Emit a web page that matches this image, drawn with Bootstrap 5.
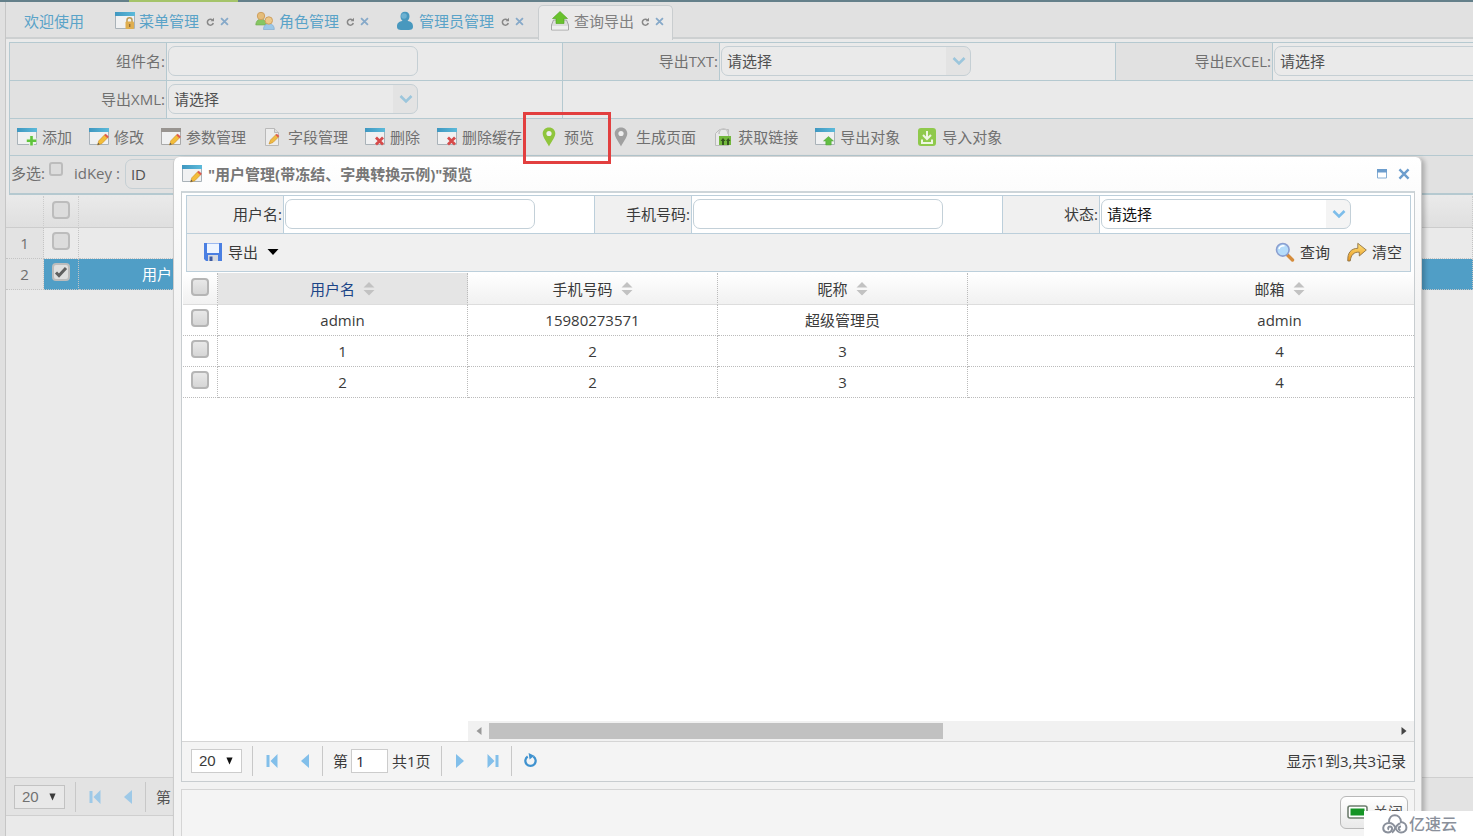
<!DOCTYPE html>
<html lang="zh-CN">
<head>
<meta charset="utf-8">
<meta name="viewport" content="width=device-width, initial-scale=1">
<title>查询导出</title>
<link href="https://cdn.jsdelivr.net/npm/bootstrap@5.3.0/dist/css/bootstrap.min.css" rel="stylesheet">
<style>
  :root { --line: #b5c9d0; --blue: #5aa3c8; }
  body { font-family: "Open Sans", "Noto Sans CJK SC", sans-serif; font-size: 15px; line-height: 20px; color: #707070; background: #eaeaea; }
  svg { display: block; flex: none; }
  .shell { min-height: 100vh; overflow: hidden; }
  .top-line { height: 2px; background: #64808a; }
  .top-line div { width: 109px; height: 2px; margin-left: 129px; background: #a5c46a; }
  .side { flex: none; width: 6px; background: #e0e0e0; border-right: 1px solid #c6c6c6; }
  .main { min-width: 0; }

  /* tabs */
  .tabs { height: 37px; padding: 3px 0 0 6px; gap: 5px; background: #e1e1e1; border-bottom: 2px solid #cdd0d1; }
  .tabs .nav-link { height: 34px; padding: 0 8px 2px 12px; color: var(--blue); border: 0; border-radius: 5px 5px 0 0; }
  .tabs .first { padding-right: 14px; }
  .tabs .nav-link.active { height: 35px; padding-left: 11px; padding-right: 7px; padding-bottom: 4px; color: #808080; background: #eaeaea; border: 1px solid #c9cdcf; border-bottom: 0; }
  .tab-name { margin: 0 7px 0 4px; }

  /* search forms */
  .form-box { border: 1px solid var(--line); border-right: 0; }
  .main > .form-box { margin: 3px 0 0 3px; }
  .f-row { height: 38px; border-bottom: 1px solid var(--line); background: #eaeaea; }
  .f-cell { width: 553px; flex: none; border-right: 1px solid var(--line); }
  .f-cell label { width: 157px; padding-right: 1px; text-align: right; line-height: 37px; background: #e1e1e1; border-right: 1px solid var(--line); }
  .field { width: 250px; height: 30px; margin: 3px 0 0 1px; padding: 0 5px; font-size: 15px; color: #505050; background-color: transparent; border: 1px solid #c5cfd4; border-radius: 7px; }
  .form-select.field { background-image: url("data:image/svg+xml,%3Csvg xmlns='http://www.w3.org/2000/svg' viewBox='0 0 14 10'%3E%3Cpath d='M1.5 2l5.5 5.5L12.5 2' fill='none' stroke='%239cc6dc' stroke-width='2.6'/%3E%3C/svg%3E"), linear-gradient(#e3e3e3, #e3e3e3); background-size: 14px 10px, 24px 100%; background-position: right 4px center, right center; background-repeat: no-repeat; }

  .tools { height: 37px; background: #e1e1e1; border-bottom: 1px solid var(--line); gap: 17px; padding: 0 7px; }
  .tool { gap: 5px; padding: 0; border: 0; border-radius: 0; color: inherit; font-size: 15px; line-height: 20px; display: flex; align-items: center; white-space: nowrap; }
  .hilite { position: absolute; inset: -15px -17px -17px -16px; border: 3px solid #e23f3f; z-index: 30; pointer-events: none; }
  .multi { height: 38px; background: #e1e1e1; border-bottom: 1px solid var(--line); padding-left: 1px; }
  .multi label { line-height: 34px; }
  .multi .key-label { margin: 0 4px 0 11px; }

  /* tick boxes */
  .tick { appearance: none; display: block; width: 18px; height: 18px; margin: 0; border: 2px solid #b5b5b5; border-radius: 4px; background: linear-gradient(#e8e8e8, #d6d6d6); }
  .tick.dim { border-color: #bcbcbc; background: #dcdcdc; }
  .tick.mini { width: 14px; height: 14px; margin-top: 6px; border-width: 2px; border-radius: 3px; }
  .tick:checked { background: #dfdfdf url("data:image/svg+xml,%3Csvg xmlns='http://www.w3.org/2000/svg' viewBox='0 0 14 14'%3E%3Cpath d='M2 7.5l3 3L12 3' fill='none' stroke='%23606060' stroke-width='3'/%3E%3C/svg%3E"); }

  /* data grids */
  .grid { table-layout: fixed; width: 100%; border-collapse: separate; border-spacing: 0; text-align: center; }
  .grid th, .grid td { height: 31px; padding: 0; font-weight: 400; vertical-align: middle; border-right: 1px dotted #bbb; border-bottom: 1px dotted #bbb; }
  .grid th { height: 32px; background: linear-gradient(#fff, #f1f1f1); border-bottom: 1px solid #ddd; }
  .grid .tick { margin: 0 auto 4px 8px; }
  .grid .name-col { background: #e5e5e5; color: #1c4587; }
  .grid .sort { display: inline-block; vertical-align: -1px; margin-left: 8px; }
  .back-grid { margin-top: 1px; }
  .back-grid th { background: linear-gradient(#eaeaea, #dfdfdf); border-color: #ccc; }
  .back-grid td { border-color: #c4c4c4; }
  .back-grid .no { background: #e3e3e3; }
  .back-grid .picked td:not(.no) { background: #509ec6; color: #fff; }
  .back-grid .picked .picked-name { text-align: left; padding-left: 63px; }

  /* pagers */
  .pager { height: 39px; border-top: 1px solid #d5d5d5; border-bottom: 1px solid #ccc; padding-left: 8px; background: #f4f4f4; }
  .dialog-panel .pager { padding: 0 0 2px 9px; height: 40px; border-bottom: 0; }
  .pager .page-size { appearance: none; width: 51px; height: 24px; padding: 0 0 0 7px; border: 1px solid #ccc; border-radius: 0; font: 15px/20px "Liberation Sans", sans-serif; color: inherit; background: #fff url("data:image/svg+xml,%3Csvg xmlns='http://www.w3.org/2000/svg' viewBox='0 0 8 8'%3E%3Cpath d='M0.5 0h7L4 8z' fill='%23111'/%3E%3C/svg%3E") no-repeat right 8px center / 7px 8px; }
  .sep { width: 1px; height: 30px; background: #c8c8c8; margin: 0 2px 0 10px; }
  .pager .tight { margin-left: 1px; }
  .pager .word { margin-left: 8px; }
  .pg { width: 33px; height: 26px; padding: 0; border: 0; display: flex; align-items: center; justify-content: center; }
  .page-no { width: 37px; height: 24px; margin: 0 4px 0 3px; padding: 0 4px; border: 1px solid #ccc; background: #fff; font-size: 15px; line-height: 20px; color: #223; }
  .back-pager { background: #e3e3e3; border-color: #cfcfcf; color: #555; }
  .back-pager .page-size { background-color: #eaeaea; opacity: .8; border-color: #bbb; }
  .back-pager .pg { opacity: .7; }
  .bottom-gap { height: 20px; }

  /* preview window */
  .dialog-win { position: absolute; z-index: 20; top: 157px; left: 173px; right: 51px; bottom: 0; color: #3a3a3a; background: linear-gradient(#fff 0, #fcfcfc 34px, #f2f2f2 160px); border: solid #ccc; border-width: 0 1px; border-radius: 6px 6px 0 0; box-shadow: 3px 1px 4px rgba(0,0,0,.22); padding: 0 6px 0 7px; }
  .dialog-title { height: 34px; gap: 6px; padding: 0 5px 0 1px; }
  .dialog-title h1 { font-size: 15px; line-height: 20px; font-weight: 700; color: #777; margin: 0; }
  .win-btn { width: 12px; height: 12px; padding: 0; border: 0; }
  .dialog-panel { --line: #bccfdb; min-height: 0; border: 1px solid #c8cdd0; border-top: 2px solid #cdd5d9; background: #fff; }
  .dialog-panel .form-box { margin: 2px 3px 0 4px; border-right: 1px solid var(--line); }
  .dialog-panel .f-row { background: #fff; }
  .dialog-panel .f-cell { flex: 1 1 0; width: auto; }
  .dialog-panel .f-cell:last-child { border-right: 0; }
  .dialog-panel .f-cell label { width: 97px; background: #f0f0f0; }
  .dialog-panel .field { color: #111; border-color: #c3d0d8; }
  .dialog-panel .form-select.field { background-image: url("data:image/svg+xml,%3Csvg xmlns='http://www.w3.org/2000/svg' viewBox='0 0 14 10'%3E%3Cpath d='M1.5 2l5.5 5.5L12.5 2' fill='none' stroke='%237dbdea' stroke-width='2.6'/%3E%3C/svg%3E"), linear-gradient(#f4f4f4, #f4f4f4); }
  .dialog-panel .tools { background: #f0f0f0; border-bottom: 0; padding: 0 8px 2px 16px; }
  .grid-area { margin: 1px 0 0 1px; }
  .frozen { width: 285px; flex: none; }
  .scroller { min-width: 0; overflow: hidden; }
  .scroller .grid { width: 1124px; }
  .h-bar { height: 20px; margin-left: 286px; background: #f1f1f1; padding: 2px 0; }
  .h-bar .arrow { width: 21px; display: flex; align-items: center; justify-content: center; }
  .thumb { width: 50.2%; background: #c1c1c1; }
  .dialog-foot { height: 47px; margin-top: 7px; padding: 6px 6px 0 0; background: #f4f4f4; border: 1px solid #d5d5d5; border-bottom: 0; }
  .close-btn { width: 68px; height: 33px; padding: 0 0 2px 6px; gap: 5px; font-size: 15px; line-height: 20px; color: #555; border: 1px solid #b8b8b8; border-radius: 6px; background: linear-gradient(#fff, #e9e9e9); display: flex; align-items: center; white-space: nowrap; }
  .brand { position: absolute; z-index: 40; right: 0; bottom: 0; width: 109px; height: 25px; padding-left: 18px; gap: 1px; background: #fff; color: #8a909b; font-size: 16px; font-weight: 500; }
</style>
</head>
<body>
<svg width="0" height="0" class="position-absolute" aria-hidden="true">
  <defs>
    <linearGradient id="gBar" x2="1" y2="0"><stop stop-color="#3f97c0"/><stop offset="1" stop-color="#5cbada"/></linearGradient>
    <linearGradient id="gOr" y2="1" x2="0"><stop stop-color="#ffe27a"/><stop offset="1" stop-color="#e8951d"/></linearGradient>
    <symbol id="win" viewBox="0 0 20 18"><path d="M.5 1h19v15.500h-19z" fill="#f0f1f2" stroke="#a9b2b8"/><path d="M0 0h20v4H0z" fill="url(#gBar)"/></symbol>
    <symbol id="pen" viewBox="0 0 20 18"><path d="M8.500 17l1.300-4.200 6-6.200 3.100 2.900-6.100 6.200z" fill="#f3bd3a" stroke="#c98c24" stroke-width=".6"/><path d="M15.300 7.200l1.400-1.500 3.200 3-1.500 1.500z" fill="#dd5a51"/><path d="M8.500 17l.7-2.200 1.600 1.500z" fill="#555"/></symbol>
    <symbol id="add" viewBox="0 0 20 18"><use href="#win"/><path d="M14.500 7.500v10M9.500 12.500h10" stroke="#e8f5e2" stroke-width="4.500"/><path d="M14.500 8v9.500M9.800 12.700h9.500" stroke="#5fc43b" stroke-width="2.600"/></symbol>
    <symbol id="edit" viewBox="0 0 20 18"><use href="#win"/><use href="#pen"/></symbol>
    <symbol id="param" viewBox="0 0 20 18"><path d="M.5 1h19v15.500h-19z" fill="#f0f1f2" stroke="#a9a9a9"/><path d="M0 0h20v4H0z" fill="#989490"/><use href="#pen"/></symbol>
    <symbol id="del" viewBox="0 0 20 18"><use href="#win"/><path d="M11 9.500l7 7M18 9.500l-7 7" stroke="#d64a4a" stroke-width="2.800"/></symbol>
    <symbol id="page" viewBox="0 0 20 20"><path d="M2.500 1.500h9l4 4v13h-13z" fill="#ececec" stroke="#b9b9b9"/><path d="M11.500 1.500v4h4" fill="#ddd" stroke="#b9b9b9"/><path d="M6 17l1.500-4L13 7.500l2.500 2.500L10 15.500z" fill="#efbb45" stroke="#c98c24" stroke-width=".6"/><path d="M12.500 8l1.300-1.300 2.500 2.400-1.300 1.500z" fill="#dd5a51"/></symbol>
    <symbol id="pin" viewBox="0 0 20 20"><path d="M10 .5c-3.800 0-6.300 2.700-6.300 6C3.700 10.500 8 15 10 19.500 12 15 16.300 10.500 16.300 6.500c0-3.300-2.500-6-6.300-6z" fill="currentColor"/><circle cx="10" cy="6.500" r="2.600" fill="#eee"/></symbol>
    <symbol id="link" viewBox="0 0 20 20"><path d="M2.500 6.500l4-4h9v16h-13z" fill="#e9e9e9" stroke="#bbb"/><path d="M6 7c0-7 9-7 9 0" fill="none" stroke="#c6c6c6" stroke-width="1.600"/><path d="M6 9h12v9H6z" fill="#73b83d"/><path d="M9 18v-4H7.500L10 11l2.500 3H11v4zM14 18v-4h-1l2.200-3 2.300 3H16v4z" fill="#35561f"/></symbol>
    <symbol id="out" viewBox="0 0 20 18"><use href="#win"/><path d="M13.500 8.500l5 4.500h-2.300v4h-5.400v-4H8.500z" fill="#62bd43" stroke="#4ca035" stroke-width=".5"/></symbol>
    <symbol id="in" viewBox="0 0 20 20"><rect x="1" y="1" width="18" height="18" rx="3" fill="#8fc94c"/><path d="M10 4v7M6 8l4 4 4-4M5 12.500V16h10v-3.500" fill="none" stroke="#eef6e2" stroke-width="2"/></symbol>
    <symbol id="lock" viewBox="0 0 20 18"><use href="#win"/><path d="M12 10V8c0-3 5-3 5 0v2" fill="none" stroke="#b99a55" stroke-width="1.500"/><rect x="10.500" y="9.500" width="8.500" height="7.500" rx="1" fill="#dfae4f"/><path d="M14.700 12v3" stroke="#967038" stroke-width="1.400"/></symbol>
    <symbol id="users" viewBox="0 0 20 20"><path d="M.8 14c0-8 10.500-8 10.500 0z" fill="#86c662" stroke="#6da84e" stroke-width=".6"/><circle cx="6" cy="5" r="3.700" fill="#e5bd79" stroke="#cfa060"/><path d="M8.500 18.500c0-8 10.800-8 10.800 0z" fill="#9cc8e8" stroke="#78a6cc" stroke-width=".6"/><circle cx="13.800" cy="9.500" r="3.700" fill="#edc887" stroke="#cfa060"/></symbol>
    <symbol id="man" viewBox="0 0 20 20"><path d="M10 .8c-3 0-4.500 2-4.500 4.500 0 2 .8 3.500 2 4.500-3.500 1-5.500 2.200-5.500 5.700 0 3 1.500 3.500 8 3.500s8-.5 8-3.500c0-3.500-2-4.700-5.500-5.700 1.200-1 2-2.500 2-4.500 0-2.500-1.500-4.500-4.500-4.500z" fill="#4898be"/><circle cx="9" cy="5" r="2.800" fill="#6db1d1"/></symbol>
    <symbol id="up" viewBox="0 0 20 20"><path d="M3.500 9h13l2 5v5h-17v-5z" fill="#ddd" stroke="#a5a5a5"/><path d="M2 15h16v3.500H2z" fill="#efefef"/><path d="M10 .5l7.500 7h-3.500v5H6v-5H2.500z" fill="#69c22d" stroke="#4fa31d" stroke-width=".6"/></symbol>
    <symbol id="rld" viewBox="0 0 9 9"><path d="M6.500 3A3 3 0 1 0 7.300 6" fill="none" stroke="#888" stroke-width="1.500"/><path d="M4.500 4.200H8V.7z" fill="#888"/></symbol>
    <symbol id="xx" viewBox="0 0 10 10"><path d="M1.200 1.200l7.600 7.600M8.800 1.200L1.200 8.800" stroke="currentColor" stroke-width="2"/></symbol>
    <symbol id="disk" viewBox="0 0 20 20"><path d="M1 1h18v18H3l-2-2z" fill="#4a7fe2"/><path d="M4 1.500h12V11H4z" fill="#eef5ff"/><path d="M5 13h10v6H5z" fill="#d5d9e0"/><path d="M6.500 14.500h3V19h-3z" fill="#3d5aa0"/></symbol>
    <symbol id="lens" viewBox="0 0 20 20"><path d="M12 12.500l5.500 5.500" stroke="#d58c3c" stroke-width="3.400" stroke-linecap="round"/><circle cx="7.800" cy="7.800" r="6.300" fill="#b5dcfa" stroke="#8b9fd0" stroke-width="1.600"/><path d="M4 7c.5-2.500 3-3.600 5.500-3" fill="none" stroke="#fff" stroke-width="1.500"/></symbol>
    <symbol id="redo" viewBox="0 0 20 20"><path d="M.8 19c-.5-8 3-12.500 10-12.700V1.300L19.300 8 12.300 14V10.200C7 9.800 4 12.800 3.200 19z" fill="url(#gOr)" stroke="#8e7447" stroke-width=".9"/></symbol>
    <symbol id="sort" viewBox="0 0 12 14"><path d="M6 0l5.500 5.500H.5zM.5 8h11L6 13.500z" fill="#c2c2c2"/></symbol>
    <symbol id="prev" viewBox="0 0 12 14"><path d="M10 0v14L2 7z" fill="#82bfea"/></symbol>
    <symbol id="first" viewBox="0 0 12 14"><path d="M.5 1h3v12h-3zM11.500 0v14L4.500 7z" fill="#82bfea"/></symbol>
    <symbol id="next" viewBox="0 0 12 14"><path d="M2 0v14l8-7z" fill="#82bfea"/></symbol>
    <symbol id="last" viewBox="0 0 12 14"><path d="M8.500 1h3v12h-3zM.5 0v14l7-7z" fill="#82bfea"/></symbol>
    <symbol id="spin" viewBox="0 0 16 16"><path d="M5 3.700A5.500 5.500 0 1 0 11 3.700" fill="none" stroke="#3f92cf" stroke-width="2.400"/><path d="M6 0l6 3-5 4z" fill="#3f92cf"/></symbol>
  </defs>
</svg>

<div class="shell position-relative d-flex flex-column">
  <div class="top-line"><div></div></div>
  <div class="d-flex flex-grow-1">
    <div class="side"></div>
    <main class="main flex-grow-1 d-flex flex-column">
      <nav class="tabs nav flex-nowrap">
        <a class="nav-link first d-flex align-items-center" href="#">欢迎使用</a>
        <a class="nav-link d-flex align-items-center" href="#"><svg width="20" height="18"><use href="#lock"/></svg><span class="tab-name">菜单管理</span><svg width="9" height="9"><use href="#rld"/></svg><svg class="ms-1" width="11" height="9" color="#86a9c9"><use href="#xx"/></svg></a>
        <a class="nav-link d-flex align-items-center" href="#"><svg width="20" height="20"><use href="#users"/></svg><span class="tab-name">角色管理</span><svg width="9" height="9"><use href="#rld"/></svg><svg class="ms-1" width="11" height="9" color="#86a9c9"><use href="#xx"/></svg></a>
        <a class="nav-link d-flex align-items-center" href="#"><svg width="20" height="20"><use href="#man"/></svg><span class="tab-name">管理员管理</span><svg width="9" height="9"><use href="#rld"/></svg><svg class="ms-1" width="11" height="9" color="#86a9c9"><use href="#xx"/></svg></a>
        <a class="nav-link active d-flex align-items-center" href="#"><svg width="20" height="20"><use href="#up"/></svg><span class="tab-name">查询导出</span><svg width="9" height="9"><use href="#rld"/></svg><svg class="ms-1" width="11" height="9" color="#86a9c9"><use href="#xx"/></svg></a>
      </nav>

      <form class="form-box overflow-hidden">
        <div class="f-row d-flex">
          <div class="f-cell d-flex"><label for="cName">组件名:</label><input id="cName" type="text" class="field"></div>
          <div class="f-cell d-flex"><label for="eTxt">导出TXT:</label><select id="eTxt" class="form-select field"><option>请选择</option></select></div>
          <div class="f-cell d-flex"><label for="eXls">导出EXCEL:</label><select id="eXls" class="form-select field"><option>请选择</option></select></div>
        </div>
        <div class="f-row d-flex">
          <div class="f-cell d-flex"><label for="eXml">导出XML:</label><select id="eXml" class="form-select field"><option>请选择</option></select></div>
        </div>
        <div class="tools d-flex align-items-center">
          <button type="button" class="btn tool"><svg width="20" height="18"><use href="#add"/></svg>添加</button>
          <button type="button" class="btn tool"><svg width="20" height="18"><use href="#edit"/></svg>修改</button>
          <button type="button" class="btn tool"><svg width="20" height="18"><use href="#param"/></svg>参数管理</button>
          <button type="button" class="btn tool"><svg width="20" height="20"><use href="#page"/></svg>字段管理</button>
          <button type="button" class="btn tool"><svg width="20" height="18"><use href="#del"/></svg>删除</button>
          <button type="button" class="btn tool"><svg width="20" height="18"><use href="#del"/></svg>删除缓存</button>
          <button type="button" class="btn tool position-relative"><svg width="20" height="20" color="#8fc53c"><use href="#pin"/></svg>预览<span class="hilite"></span></button>
          <button type="button" class="btn tool"><svg width="20" height="20" color="#a0a0a0"><use href="#pin"/></svg>生成页面</button>
          <button type="button" class="btn tool"><svg width="20" height="20"><use href="#link"/></svg>获取链接</button>
          <button type="button" class="btn tool"><svg width="20" height="18"><use href="#out"/></svg>导出对象</button>
          <button type="button" class="btn tool"><svg width="20" height="20"><use href="#in"/></svg>导入对象</button>
        </div>
        <div class="multi d-flex">
          <label for="many" class="me-1">多选:</label>
          <input id="many" type="checkbox" class="tick dim mini">
          <label for="idKey" class="key-label">idKey :</label>
          <input id="idKey" type="text" class="field" value="ID">
        </div>
      </form>

      <div class="flex-grow-1">
        <table class="grid back-grid">
          <colgroup><col width="38"><col width="35"><col></colgroup>
          <thead><tr><th></th><th><input type="checkbox" class="tick dim" aria-label="全选"></th><th></th></tr></thead>
          <tbody>
            <tr><td class="no">1</td><td><input type="checkbox" class="tick dim" aria-label="1"></td><td></td></tr>
            <tr class="picked"><td class="no">2</td><td><input type="checkbox" class="tick dim" checked aria-label="2"></td><td class="picked-name">用户</td></tr>
          </tbody>
        </table>
      </div>
      <div class="pager back-pager d-flex align-items-center">
        <select class="page-size" aria-label="每页"><option>20</option></select>
        <span class="sep"></span>
        <button class="btn pg" aria-label="首页"><svg width="12" height="14"><use href="#first"/></svg></button>
        <button class="btn pg" aria-label="上一页"><svg width="12" height="14"><use href="#prev"/></svg></button>
        <span class="sep tight"></span><span class="word">第</span>
      </div>
      <div class="bottom-gap"></div>
    </main>
  </div>

  <section class="dialog-win d-flex flex-column" role="dialog" aria-labelledby="dlgTitle">
    <header class="dialog-title d-flex align-items-center">
      <svg width="20" height="18"><use href="#edit"/></svg>
      <h1 id="dlgTitle" class="flex-grow-1">"用户管理(带冻结、字典转换示例)"预览</h1>
      <button class="btn win-btn me-1" aria-label="最大化"><svg width="12" height="12" viewBox="0 0 12 12"><path d="M1.500 1.500h9v8.500h-9z" fill="#fff" stroke="#86aed4"/><path d="M1 1h10v3.500H1z" fill="#6c9dcd"/></svg></button>
      <button class="btn win-btn" aria-label="关闭窗口"><svg width="12" height="12" color="#6c9dcd"><use href="#xx"/></svg></button>
    </header>

    <div class="dialog-panel flex-grow-1 d-flex flex-column">
      <form class="form-box">
        <div class="f-row d-flex">
          <div class="f-cell d-flex"><label for="uName">用户名:</label><input id="uName" type="text" class="field"></div>
          <div class="f-cell d-flex"><label for="uTel">手机号码:</label><input id="uTel" type="text" class="field"></div>
          <div class="f-cell d-flex"><label for="uState">状态:</label><select id="uState" class="form-select field"><option>请选择</option></select></div>
        </div>
        <div class="tools d-flex align-items-center">
          <button type="button" class="btn tool me-auto"><svg width="20" height="20"><use href="#disk"/></svg>导出<svg class="ms-1" width="12" height="6" viewBox="0 0 12 6"><path d="M.5 0h11L6 6z" fill="#000"/></svg></button>
          <button type="button" class="btn tool"><svg width="20" height="20"><use href="#lens"/></svg>查询</button>
          <button type="button" class="btn tool"><svg width="20" height="20"><use href="#redo"/></svg>清空</button>
        </div>
      </form>

      <div class="grid-area flex-grow-1 d-flex">
        <div class="frozen">
          <table class="grid">
            <colgroup><col width="35"><col></colgroup>
            <thead><tr><th><input type="checkbox" class="tick" aria-label="全选"></th><th class="name-col">用户名<svg class="sort" width="12" height="14"><use href="#sort"/></svg></th></tr></thead>
            <tbody>
              <tr><td><input type="checkbox" class="tick" aria-label="admin"></td><td>admin</td></tr>
              <tr><td><input type="checkbox" class="tick" aria-label="1"></td><td>1</td></tr>
              <tr><td><input type="checkbox" class="tick" aria-label="2"></td><td>2</td></tr>
            </tbody>
          </table>
        </div>
        <div class="scroller flex-grow-1">
          <table class="grid">
            <colgroup><col width="250"><col width="250"><col></colgroup>
            <thead><tr><th>手机号码<svg class="sort" width="12" height="14"><use href="#sort"/></svg></th><th>昵称<svg class="sort" width="12" height="14"><use href="#sort"/></svg></th><th>邮箱<svg class="sort" width="12" height="14"><use href="#sort"/></svg></th></tr></thead>
            <tbody>
              <tr><td>15980273571</td><td>超级管理员</td><td>admin</td></tr>
              <tr><td>2</td><td>3</td><td>4</td></tr>
              <tr><td>2</td><td>3</td><td>4</td></tr>
            </tbody>
          </table>
        </div>
      </div>
      <div class="h-bar d-flex">
        <span class="arrow"><svg width="6" height="8" viewBox="0 0 6 8"><path d="M5.500 0v8L.5 4z" fill="#999"/></svg></span>
        <div class="flex-grow-1 d-flex"><div class="thumb"></div></div>
        <span class="arrow"><svg width="6" height="8" viewBox="0 0 6 8"><path d="M.5 0v8l5-4z" fill="#444"/></svg></span>
      </div>
      <div class="pager d-flex align-items-center">
        <select class="page-size" aria-label="每页条数"><option>20</option></select>
        <span class="sep"></span>
        <button class="btn pg" aria-label="首页"><svg width="12" height="14"><use href="#first"/></svg></button>
        <button class="btn pg" aria-label="上一页"><svg width="12" height="14"><use href="#prev"/></svg></button>
        <span class="sep tight"></span>
        <label for="pageNo" class="word">第</label><input id="pageNo" class="page-no" type="text" value="1"><span>共1页</span>
        <span class="sep"></span>
        <button class="btn pg" aria-label="下一页"><svg width="12" height="14"><use href="#next"/></svg></button>
        <button class="btn pg" aria-label="末页"><svg width="12" height="14"><use href="#last"/></svg></button>
        <span class="sep tight"></span>
        <button class="btn pg" aria-label="刷新"><svg width="15" height="15"><use href="#spin"/></svg></button>
        <span class="ms-auto me-2">显示1到3,共3记录</span>
      </div>
    </div>

    <footer class="dialog-foot d-flex justify-content-end align-items-start">
      <button class="btn close-btn"><svg width="21" height="14" viewBox="0 0 21 14"><rect x="1" y="1" width="19" height="12" rx="2" fill="#fff" stroke="#6e7d6e" stroke-width="1.600"/><path d="M3.500 3.500h14v7h-14z" fill="#159426"/></svg>关闭</button>
    </footer>
  </section>

  <div class="brand d-flex align-items-center">
    <svg width="26" height="20" viewBox="0 0 26 20"><g fill="none" stroke="#8a909b" stroke-width="2"><path d="M7 8C7 -1 18.500 -1 19 8c7 .5 7.500 10.500 0 10.500-3.500 0-4.500-2-5.500-4.500S10.500 9 7 9c-7 0-8 9.500-1 9.500 4.500 0 5.500-6 2-6-2 0-2.500 2.500-1 3"/><path d="M10 18.500c3-1 3.500-9 8.500-9M19 12.500c-3 0-3 3.500-.5 3.500"/></g></svg>
    <span>亿速云</span>
  </div>
</div>
<script src="https://cdn.jsdelivr.net/npm/bootstrap@5.3.0/dist/js/bootstrap.bundle.min.js"></script>
</body>
</html>
